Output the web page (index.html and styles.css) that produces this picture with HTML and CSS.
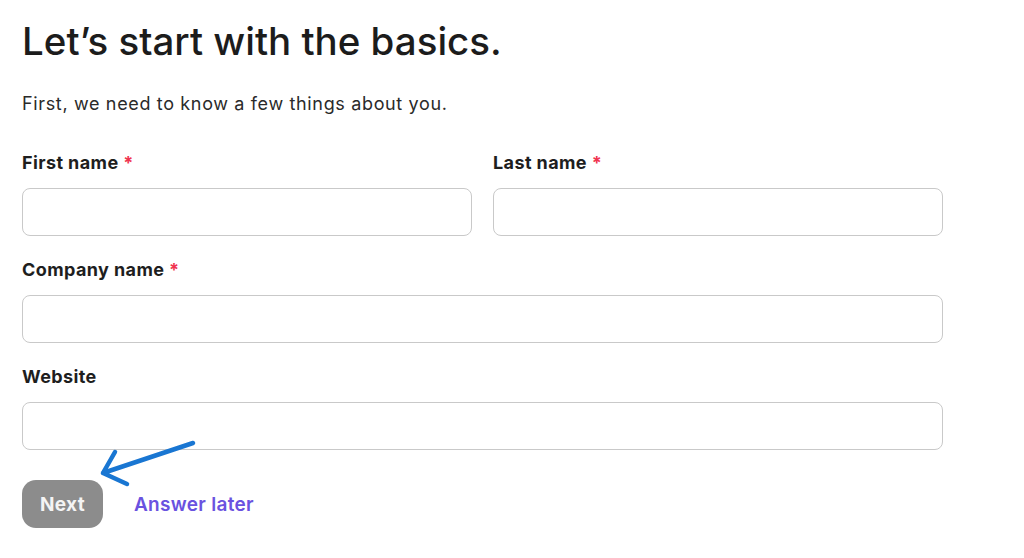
FILE: index.html
```html
<!DOCTYPE html>
<html>
<head>
<meta charset="utf-8">
<link rel="stylesheet" href="styles.css">
</head>
<body>
<main class="page">
  <h1 class="title">Let’s start with the basics.</h1>
  <p class="lead">First, we need to know a few things about you.</p>
  <form class="form">
    <div class="row two">
      <label class="field">
        <span class="label">First name <span class="req">*</span></span>
        <input class="input" type="text">
      </label>
      <label class="field">
        <span class="label">Last name <span class="req">*</span></span>
        <input class="input" type="text">
      </label>
    </div>
    <label class="field">
      <span class="label">Company name <span class="req">*</span></span>
      <input class="input" type="text">
    </label>
    <label class="field">
      <span class="label">Website</span>
      <input class="input" type="text">
    </label>
    <div class="actions">
      <button type="button" class="btn">Next</button>
      <a class="later" href="#">Answer later</a>
      <svg class="arrow" width="110" height="56" viewBox="0 0 110 56">
        <path d="M98 8 L8 38 M8 38 L20 17 M8 38 L32 49" fill="none" stroke="#1976d2" stroke-width="4.5" stroke-linecap="round" stroke-linejoin="round"/>
      </svg>
    </div>
  </form>
</main>
</body>
</html>
```
FILE: styles.css
```css
* { box-sizing: border-box; }
html, body { margin: 0; padding: 0; background: #fff; }
body {
  font-family: Inter, "Noto Sans", "Liberation Sans", sans-serif;
  color: #222;
}
.page {
  width: 921px;
  margin-left: 22px;
  padding-top: 18px;
}
.title {
  margin: 0;
  font-size: 38.5px;
  font-weight: 500;
  letter-spacing: 0;
  line-height: 46px;
  color: #1c1c1c;
}
.lead {
  margin: 29px 0 0;
  font-size: 18px;
  letter-spacing: 0.65px;
  line-height: 22px;
  color: #2a2a2a;
}
.form {
  display: flex;
  flex-direction: column;
  gap: 23px;
  margin-top: 37px;
}
.row.two {
  display: grid;
  grid-template-columns: 1fr 1fr;
  gap: 21px;
}
.field {
  display: flex;
  flex-direction: column;
  gap: 14px;
}
.label {
  font-size: 18px;
  font-weight: 700;
  letter-spacing: 0.4px;
  line-height: 22px;
  color: #1e1e1e;
}
.req { color: #f0334f; }
.input {
  height: 48px;
  width: 100%;
  border: 1px solid #c9c9c9;
  border-radius: 8px;
  background: #fff;
  font: inherit;
}
.actions {
  position: relative;
  display: flex;
  align-items: center;
  gap: 31px;
  margin-top: 7px;
}
.btn {
  width: 81px;
  height: 48px;
  border: 0;
  border-radius: 14px;
  background: #8c8c8c;
  color: #f4f4f4;
  font: inherit;
  font-size: 19px;
  font-weight: 700;
  letter-spacing: 0.3px;
}
.later {
  font-size: 19px;
  font-weight: 600;
  letter-spacing: 0.3px;
  color: #6a52e0;
  text-decoration: none;
}
.arrow {
  position: absolute;
  left: 73px;
  top: -45px;
}
```
